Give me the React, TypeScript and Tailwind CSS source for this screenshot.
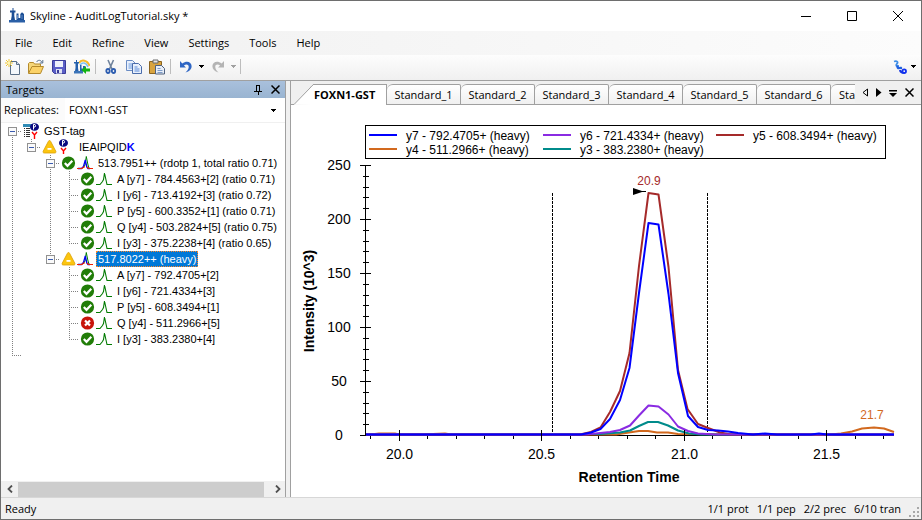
import { ReactNode } from "react";
import clsx from "clsx";

type Cell = "none" | "pass" | "leaf" | "end" | "open" | "openEnd" | "openTop";
type Status = "ok" | "warn" | "error";
type Kind = "protein" | "peptide" | "precursor" | "transition";

interface TreeRow {
  cells: Cell[];
  status?: Status;
  kind: Kind;
  label: ReactNode;
  selected?: boolean;
}

const menus = ["File", "Edit", "Refine", "View", "Settings", "Tools", "Help"];

const tabs = ["Standard_1", "Standard_2", "Standard_3", "Standard_4", "Standard_5", "Standard_6"];

const counts = ["1/1 prot", "1/1 pep", "2/2 prec", "6/10 tran"];

const rows: TreeRow[] = [
  { cells: ["openTop"], kind: "protein", label: "GST-tag" },
  { cells: ["pass", "openEnd"], status: "warn", kind: "peptide", label: <>IEAIPQID<b className="text-[#0000ff]">K</b></> },
  { cells: ["pass", "none", "open"], status: "ok", kind: "precursor", label: "513.7951++ (rdotp 1, total ratio 0.71)" },
  { cells: ["pass", "none", "pass", "leaf"], status: "ok", kind: "transition", label: "A [y7] - 784.4563+[2] (ratio 0.71)" },
  { cells: ["pass", "none", "pass", "leaf"], status: "ok", kind: "transition", label: "I [y6] - 713.4192+[3] (ratio 0.72)" },
  { cells: ["pass", "none", "pass", "leaf"], status: "ok", kind: "transition", label: "P [y5] - 600.3352+[1] (ratio 0.71)" },
  { cells: ["pass", "none", "pass", "leaf"], status: "ok", kind: "transition", label: "Q [y4] - 503.2824+[5] (ratio 0.75)" },
  { cells: ["pass", "none", "pass", "end"], status: "ok", kind: "transition", label: "I [y3] - 375.2238+[4] (ratio 0.65)" },
  { cells: ["pass", "none", "openEnd"], status: "warn", kind: "precursor", label: "517.8022++ (heavy)", selected: true },
  { cells: ["pass", "none", "none", "leaf"], status: "ok", kind: "transition", label: "A [y7] - 792.4705+[2]" },
  { cells: ["pass", "none", "none", "leaf"], status: "ok", kind: "transition", label: "I [y6] - 721.4334+[3]" },
  { cells: ["pass", "none", "none", "leaf"], status: "ok", kind: "transition", label: "P [y5] - 608.3494+[1]" },
  { cells: ["pass", "none", "none", "leaf"], status: "error", kind: "transition", label: "Q [y4] - 511.2966+[5]" },
  { cells: ["pass", "none", "none", "end"], status: "ok", kind: "transition", label: "I [y3] - 383.2380+[4]" },
];

/* ---------- icons ---------- */

function Icon({ children, className }: { children: ReactNode; className?: string }) {
  return (
    <svg viewBox="0 0 16 16" className={clsx("h-4 w-4 shrink-0", className)} fill="none" aria-hidden="true">
      {children}
    </svg>
  );
}

const AppIcon = () => (
  <Icon>
    <path d="M3.500 0h1v2.500h2v2H5.300V8l.7 4H2l.7-4V4.500H1v-2h2.500z" fill="#1c4f96" />
    <path d="M7.500 5.500h2V10h1.800V6l1.700-1.700L15 6v6H7.500z" fill="#1c4f96" />
    <path d="M0 12h16v2.500H0z" fill="#2a5fa6" />
    <path d="M8.500 7v4M13 7v4" stroke="#6f9ad0" strokeWidth=".8" />
  </Icon>
);

const NewIcon = () => (
  <Icon>
    <path d="M5.500 2.500h6l3 3v10h-9z" fill="#f4f8fc" stroke="#5a6f87" />
    <path d="M11.500 2.500v3h3" fill="#cfdcec" stroke="#5a6f87" />
    <path d="M4 0v8M0 4h8M1 1l6 6M7 1L1 7" stroke="#efc636" />
    <circle cx="4" cy="4" r="1.500" fill="#fff6b0" />
  </Icon>
);

const OpenIcon = () => (
  <Icon>
    <path d="M.5 14V4.500l1-1h4l1 1.500h6v3" fill="#f6d77a" stroke="#b48a2c" />
    <path d="M.5 14.500L4 7.500h11.500l-3 7z" fill="#fbd268" stroke="#b48a2c" />
    <path d="M8.500 3C10 .6 13 .8 14 3.500M14.800 1v3h-3" stroke="#55708f" />
  </Icon>
);

const SaveIcon = () => (
  <Icon>
    <path d="M1.500 1.500h13v13h-11l-2-2z" fill="#5b5fc7" stroke="#3a3c98" />
    <path d="M4 2h8v6H4z" fill="#eef1fb" />
    <path d="M5 10h6v4.500H5z" fill="#dfe3f4" />
    <path d="M6 11h2v3H6z" fill="#3a3c98" />
  </Icon>
);

const ImportIcon = () => (
  <Icon>
    <path d="M5 4C7.500 0 13.500 1 15.500 7" stroke="#f4b92c" strokeWidth="2" />
    <path d="M6 6C8 3 12 3 14 8" stroke="#7ac1f0" strokeWidth="1.500" />
    <path d="M2 1h1v2h2v1.500H4V9l.5 3H1l.5-3V4.500H0V3h2zM6 6h1.500v3.500H9V7h2v5H6z" fill="#2460ac" />
    <path d="M0 12h9v2.500H0z" fill="#3c74b8" />
    <path d="M7.500 11L12 7v2.500h4v3h-4V15z" fill="#12b312" />
  </Icon>
);

const CutIcon = () => (
  <Icon>
    <path d="M5 1l4 9M10.500 1l-4 9" stroke="#70839c" strokeWidth="1.600" />
    <ellipse cx="5" cy="12" rx="1.700" ry="2" stroke="#2d5db0" strokeWidth="1.800" />
    <ellipse cx="10.500" cy="12" rx="1.700" ry="2" stroke="#2d5db0" strokeWidth="1.800" />
  </Icon>
);

const CopyIcon = () => (
  <Icon>
    <path d="M.5 1.500h6l2.500 2.500v7.500H.5z" fill="#e8f0fc" stroke="#6a8cc4" />
    <path d="M2.500 5h4M2.500 7h4M2.500 9h4" stroke="#6a9ae0" />
    <path d="M6.500 4.500h6l3 3v7h-9z" fill="#e8f0fc" stroke="#4a6cab" />
    <path d="M8.500 8h3M8.500 10h5M8.500 12h5" stroke="#5a8ad8" />
  </Icon>
);

const PasteIcon = () => (
  <Icon>
    <path d="M.5 2.500h12v12H.5z" fill="#d9a43f" stroke="#8a6420" />
    <path d="M4 1h5v3H4z" fill="#e6e6e6" stroke="#6b6b6b" />
    <path d="M6.500 6.500h6l3 3v5.500h-9z" fill="#e8eef8" stroke="#4f617f" />
    <path d="M8.500 9.500h3M8.500 11.500h5M8.500 13.500h5" stroke="#7d9cc8" />
  </Icon>
);

const UndoIcon = ({ color }: { color: string }) => (
  <Icon>
    <path d="M2 2v6.500h6L5.900 6.400C8.500 4.600 11 5.600 10.700 8.200c-.2 2-1.400 3.300-3.200 5.300 4-1.300 6.200-3.300 6.100-6.500C13.500 2.700 8.500 1.200 4.300 4.500z" fill={color} />
  </Icon>
);

const HelixIcon = () => (
  <Icon>
    <path d="M2 2.500c3-1 4.500.5 3 2.200S4 7.500 7 7" stroke="#3f8fe6" strokeWidth="1.800" />
    <path d="M5.500 6.500c-.5 2 .5 3 2 2.500s2-.5 1.500 1" stroke="#1f5fe0" strokeWidth="2.200" />
    <path d="M8 11c.5 2 2 3 3.500 2.500" stroke="#1636e0" strokeWidth="2.200" />
    <circle cx="12.200" cy="12.200" r="1.800" stroke="#1030f0" strokeWidth="1.800" />
  </Icon>
);

function Caret({ className }: { className?: string }) {
  return (
    <svg viewBox="0 0 5 3" className={clsx("h-[3px] w-[5px]", className)} fill="currentColor" shapeRendering="crispEdges" aria-hidden="true">
      <path d="M0 0h5v1H0zM1 1h3v1H1zM2 2h1v1H2z" />
    </svg>
  );
}

function StatusIcon({ status }: { status: Status }) {
  if (status === "warn") {
    return (
      <Icon>
        <path d="M8.500 1.500c.6 0 .9.400 1.200 1l5 9.500c.6 1.200.2 2-1 2H3.300c-1.200 0-1.600-.8-1-2l5-9.500c.3-.6.600-1 1.200-1z" fill="#fcc50f" stroke="#dba006" strokeWidth=".8" />
        <path d="M6.500 9h4v1.800h-4z" fill="#fff" />
      </Icon>
    );
  }
  return (
    <Icon>
      <circle cx="8.500" cy="8" r="6.600" fill={status === "ok" ? "#217d08" : "#c8140a"} />
      {status === "ok" ? (
        <path d="M4.800 8l2.700 2.800 4.800-5" stroke="#fff" strokeWidth="2.200" />
      ) : (
        <path d="M6 5.500l5 5M11 5.500l-5 5" stroke="#fff" strokeWidth="2.200" />
      )}
    </Icon>
  );
}

function KindIcon({ kind }: { kind: Kind }) {
  if (kind === "protein") {
    return (
      <Icon>
        <path d="M0 1h10v3H0z" fill="#2f8bb5" />
        <path d="M1 5.500h1M1 7.500h1M1 9.500h1M1 11.500h1M1 13.500h1M3 5.500h4M3 7.500h4M3 9.500h4M3 11.500h4M3 13.500h4" stroke="#333" />
        <ellipse cx="11.500" cy="4" rx="4.500" ry="3.800" fill="#0a0a80" />
        <path d="M10.500 6.500v-5H12q1.300 1.300 0 2.500h-1.500" stroke="#fff" />
        <path d="M9 9l2.500 3L14 9M11.500 12v4" stroke="#f00" strokeWidth="1.400" />
      </Icon>
    );
  }
  if (kind === "peptide") {
    return (
      <Icon>
        <ellipse cx="5.500" cy="4" rx="4.500" ry="3.800" fill="#0a0a80" />
        <path d="M4.500 6.500v-5H6q1.300 1.300 0 2.500H4.500" stroke="#fff" />
        <path d="M3 9l2.500 3L8 9M5.500 12v3" stroke="#f00" strokeWidth="1.400" />
      </Icon>
    );
  }
  if (kind === "precursor") {
    return (
      <Icon>
        <path d="M6 13l2-3 1.300-8.500L10.800 9l1.200 4.500h4" stroke="#008000" />
        <path d="M1 13.500h3.500l2-2L8.300 5l1.500 7 1.200 1.500h2" stroke="#0000f0" strokeWidth="1.300" />
        <path d="M0 13.500h5l1.500-1.500H8M10 12l1.500 1.500H16" stroke="#f02000" strokeWidth="1.200" />
      </Icon>
    );
  }
  return (
    <Icon>
      <path d="M0 13.500h4l2.500-3 1-2L8.500 2l1.500 7 1 4.500h5" stroke="#007a00" strokeWidth="1.100" />
    </Icon>
  );
}

/* ---------- targets tree ---------- */

// dotted connector lines and the collapse box
function TreeCell({ cell }: { cell: Cell }) {
  const open = cell.startsWith("open");
  const up = !["none", "openTop"].includes(cell);
  const down = ["pass", "leaf", "open", "openTop"].includes(cell);
  const across = cell !== "none" && cell !== "pass";
  return (
    <svg viewBox="0 0 19 16" className="h-4 w-[19px] shrink-0" fill="none" shapeRendering="crispEdges" aria-hidden="true">
      <g stroke="#808080" strokeDasharray="1 1">
        {up && <path d="M9.500 0v8" />}
        {down && <path d="M9.500 8v8" />}
        {across && <path d="M9 8.500h10" />}
      </g>
      {open && (
        <>
          <rect x="5.500" y="4.500" width="8" height="8" fill="#fafafa" stroke="#919191" />
          <path d="M7 8.500h5" stroke="#3b5cb0" />
        </>
      )}
    </svg>
  );
}

function TargetsTree() {
  return (
    <ul className="min-h-0 flex-1 overflow-hidden bg-white pl-[2px] font-['Liberation_Sans',sans-serif] text-[11px] leading-4">
      {rows.map((row, i) => (
        <li key={i} className="flex h-4 items-center whitespace-nowrap">
          {row.cells.map((cell, c) => (
            <TreeCell key={c} cell={cell} />
          ))}
          {row.status && <StatusIcon status={row.status} />}
          <span className="flex pl-px">
            <KindIcon kind={row.kind} />
          </span>
          <span
            className={clsx(
              "ml-[3px] px-[2px]",
              row.selected && "bg-[#0078d7] text-white outline-1 -outline-offset-1 outline-dotted outline-[#ff8728]"
            )}
          >
            {row.label}
          </span>
        </li>
      ))}
      <li className="flex h-4">
        <TreeCell cell="end" />
      </li>
    </ul>
  );
}

function TargetsPanel() {
  return (
    <section className="flex w-[285px] shrink-0 flex-col border-r border-[#a0a0a0]">
      <header className="flex h-[17px] items-center bg-linear-to-b from-[#a9c0dc] to-[#99b4d1] pl-[5px]">
        <h2 className="flex-1">Targets</h2>
        <button aria-label="Pin" className="flex w-[17px] justify-center">
          <svg viewBox="0 0 8 10" className="h-[10px] w-2" fill="none" stroke="#000" shapeRendering="crispEdges">
            <path d="M2.500 6V.5h3V6M5 1v5M0 6.500h8M4 7v3" />
          </svg>
        </button>
        <button aria-label="Close" className="flex w-[19px] justify-center">
          <svg viewBox="0 0 9 9" className="h-[9px] w-[9px]" fill="none" stroke="#000" strokeWidth="1.500">
            <path d="M.5.5l8 8M8.500.5l-8 8" />
          </svg>
        </button>
      </header>
      <div className="flex h-[25px] items-center border-b border-[#f0f0f0] bg-[#fbfbfb] pl-[3px]">
        <label htmlFor="replicates" className="w-[61px]">Replicates:</label>
        <div className="relative flex h-full flex-1 items-center bg-white">
          <select id="replicates" className="h-full w-full appearance-none bg-transparent pl-1 outline-none">
            <option>FOXN1-GST</option>
            <option>Standard_1</option>
            <option>Standard_2</option>
          </select>
          <Caret className="pointer-events-none absolute right-[9px]" />
        </div>
      </div>
      <TargetsTree />
      <div className="flex h-4 items-center bg-[#f0f0f0]">
        <button aria-label="Scroll left" className="flex w-[17px] justify-center">
          <svg viewBox="0 0 6 8" className="h-2 w-[6px]" fill="none" stroke="#505050" strokeWidth="1.800">
            <path d="M5 .5L1.500 4 5 7.500" />
          </svg>
        </button>
        <div className="h-[15px] flex-1 bg-[#cdcdcd]" />
        <button aria-label="Scroll right" className="flex w-[21px] justify-center pl-[6px]">
          <svg viewBox="0 0 6 8" className="h-2 w-[6px]" fill="none" stroke="#505050" strokeWidth="1.800">
            <path d="M1 .5L4.500 4 1 7.500" />
          </svg>
        </button>
      </div>
    </section>
  );
}

/* ---------- chromatogram ---------- */

const BASE = 329.5;

const series = [
  { name: "y4 - 511.2966+ (heavy)", color: "#d2691e", points: `75,${BASE} 84,329 88,328.500 104,328.500 108,${BASE} 142,329 154,328.500 160,${BASE} 325,${BASE} 338,327.500 348,326 357,326 366,327.500 377,327.500 387,329 540,${BASE} 550,328.500 561,326.500 571,323.500 583,322.500 593,323.500 603,327` },
  { name: "y3 - 383.2380+ (heavy)", color: "#008b8b", points: `75,${BASE} 309,329 329,327.500 339,325.500 348,321 357,317 367,317 377,320.500 387,325.500 398,328.500 410,${BASE} 603,${BASE}` },
  { name: "y5 - 608.3494+ (heavy)", color: "#a52a2a", points: `75,${BASE} 289,${BASE} 300,327 309.500,322.500 319,307 329,286 338.500,248 348,161 357.500,88 367.500,89.500 377.500,162 387,265 396.500,304 407,319 417,323 429,327.500 440,${BASE} 603,${BASE}` },
  { name: "y6 - 721.4334+ (heavy)", color: "#8a2be2", points: `75,${BASE} 295,${BASE} 319,327 329,325 339,320.500 348,310.500 357.500,300.500 367.500,301.500 377.500,309.500 387,321.500 397,326 407,328.500 424,${BASE} 603,${BASE}` },
  { name: "y7 - 792.4705+ (heavy)", color: "#0000ff", points: `75,${BASE} 290,${BASE} 300,327.500 309.500,324 319,314 329,295 338.500,263 348,188 357.500,118 367.500,119.500 377.500,189 387,268 397,311 407,322 417,325 427,325.500 437,326.500 447,328 462,${BASE} 474,328.500 486,${BASE} 520,${BASE} 528,328.500 536,${BASE} 603,${BASE}` },
];

const legend = [
  { series: 4, x: 78, y: 30 },
  { series: 3, x: 252, y: 30 },
  { series: 2, x: 425, y: 30 },
  { series: 0, x: 78, y: 44 },
  { series: 1, x: 252, y: 44 },
];

const xTicks = Array.from({ length: 19 }, (_, i) => 199 + i);
const yTicks = Array.from({ length: 26 }, (_, i) => i * 10);
const toX = (tenths: number) => Math.floor(108 + (tenths - 200) * 28.5) + 0.5;
const toY = (value: number) => Math.round(330 - value * 1.08) + 0.5;

function Chromatogram() {
  return (
    <svg viewBox="0 0 630 392" className="min-h-0 w-full flex-1 bg-white font-['Liberation_Sans',sans-serif]" fill="none" role="img" aria-label="Intensity by retention time">
      <rect x="74.500" y="20.500" width="520" height="33" stroke="#000" />
      {legend.map((item) => (
        <g key={item.series}>
          <path d={`M${item.x} ${item.y}h28`} stroke={series[item.series].color} strokeWidth="2" />
          <text x={item.x + 37} y={item.y + 5} fontSize="12" fill="#000">{series[item.series].name}</text>
        </g>
      ))}

      <g stroke="#000" shapeRendering="crispEdges">
        <path d="M74 330.500h529M74.500 60v270" />
        {yTicks.map((v) => (
          <path key={v} d={v % 50 ? `M72 ${toY(v)}h6` : `M69 ${toY(v)}h11`} />
        ))}
        {xTicks.map((t) => (
          <path key={t} d={t % 5 ? `M${toX(t)} 331v3` : `M${toX(t)} 325v11`} />
        ))}
        <path d="M261.500 88v242M416.500 88v242" strokeDasharray="3 1" />
      </g>

      {series.map((s) => (
        <polyline key={s.name} points={s.points} stroke={s.color} strokeWidth="2" strokeLinejoin="round" />
      ))}
      <g stroke="#000" shapeRendering="crispEdges">
        {xTicks.filter((t) => t % 5 === 0).map((t) => (
          <path key={t} d={`M${toX(t)} 325v6`} />
        ))}
      </g>
      <path d="M342 83l9 3h4v1h-4l-9 3z" fill="#000" />

      <g fontSize="14" fill="#000" textAnchor="middle">
        {yTicks.filter((v) => v % 50 === 0).map((v) => (
          <text key={v} x="48" y={toY(v) + 4}>{v}</text>
        ))}
        {xTicks.filter((t) => t % 5 === 0).map((t) => (
          <text key={t} x={toX(t)} y="354">{(t / 10).toFixed(1)}</text>
        ))}
        <g fontWeight="bold">
          <text x="338" y="377">Retention Time</text>
          <text transform="translate(23 196) rotate(-90)">Intensity (10^3)</text>
        </g>
      </g>
      <g fontSize="12" textAnchor="middle">
        <text x="358" y="80" fill="#a52a2a">20.9</text>
        <text x="581" y="314" fill="#d2691e">21.7</text>
      </g>
    </svg>
  );
}

const tabStyle = "flex h-[21px] items-center border-t border-b border-[#a0a0a0] bg-linear-to-b from-white to-[#f0f0f0] rounded-tl-md";

function GraphPanel() {
  return (
    <section className="flex min-w-0 flex-1 flex-col border-l border-[#a0a0a0]">
      <div className="flex h-6 items-end bg-[#f0f0f0]">
        <div className="flex h-full min-w-0 flex-1 items-end overflow-hidden" role="tablist">
          <div className="h-full w-[3px] shrink-0 border-b border-[#a0a0a0]" />
          <button role="tab" aria-selected="true" className="flex h-[21px] shrink-0 items-center border-r border-[#a0a0a0] font-bold">
            <svg viewBox="0 0 19 21" className="h-[21px] w-[19px]" fill="#fff" aria-hidden="true">
              <path d="M0 20.500L16 4Q19 .5 22 .5V21z" />
              <path d="M0 20.500L16 4Q18 1.500 19 1" fill="none" stroke="#a0a0a0" />
            </svg>
            <span className="flex h-full w-[73px] items-center border-t border-[#a0a0a0] bg-white pl-px">FOXN1-GST</span>
          </button>
          {tabs.map((tab) => (
            <button key={tab} role="tab" aria-selected="false" className={clsx(tabStyle, "w-[74px] shrink-0 justify-center rounded-tr-xs border-r")}>
              {tab}
            </button>
          ))}
          <button role="tab" aria-selected="false" className={clsx(tabStyle, "min-w-0 flex-1 pl-2")}>
            Sta
          </button>
        </div>
        <div className="flex h-full w-[66px] shrink-0 items-center justify-around border-b border-[#a0a0a0] px-[3px]">
          <button aria-label="Previous tabs">
            <svg viewBox="0 0 6 9" className="h-[9px] w-[6px]" fill="none" stroke="#000"><path d="M5.500 1v7L1 4.500z" /></svg>
          </button>
          <button aria-label="Next tabs">
            <svg viewBox="0 0 6 9" className="h-[9px] w-[6px]"><path d="M0 0v9l5.500-4.500z" /></svg>
          </button>
          <button aria-label="Tab list">
            <svg viewBox="0 0 8 8" className="h-2 w-2"><path d="M0 1h8v1.500H0zM0 4h8L4 8z" /></svg>
          </button>
          <button aria-label="Close tab">
            <svg viewBox="0 0 9 9" className="h-[9px] w-[9px]" fill="none" stroke="#000" strokeWidth="1.500"><path d="M.5.5l8 8M8.500.5l-8 8" /></svg>
          </button>
        </div>
      </div>
      <Chromatogram />
    </section>
  );
}

/* ---------- window frame ---------- */

function TitleBar() {
  return (
    <header className="flex h-[30px] shrink-0 items-center bg-white pl-2">
      <AppIcon />
      <h1 className="flex-1 pl-[5px]">Skyline - AuditLogTutorial.sky *</h1>
      <div className="flex">
        {[
          { name: "Minimize", d: "M0 5.500h10" },
          { name: "Maximize", d: "M.5.5h9v9h-9z" },
          { name: "Close", d: "M0 0l10 10M10 0L0 10" },
        ].map((b) => (
          <button key={b.name} aria-label={b.name} className="flex h-7 w-[46px] items-center justify-center">
            <svg viewBox="0 0 10 10" className="h-[10px] w-[10px]" fill="none" stroke="#000"><path d={b.d} /></svg>
          </button>
        ))}
      </div>
    </header>
  );
}

function ToolButton({ name, children }: { name: string; children: ReactNode }) {
  return (
    <button aria-label={name} className="flex w-[23px] items-center justify-center">
      {children}
    </button>
  );
}

const Separator = () => <div className="mx-[2px] h-[15px] w-[2px] border-l border-[#bdbdbd]" />;

function Toolbar() {
  return (
    <div className="flex h-[25px] shrink-0 items-center bg-linear-to-b from-[#fdfdfd] to-[#f0f0f0] pb-[2px]" role="toolbar">
      <ToolButton name="New"><NewIcon /></ToolButton>
      <ToolButton name="Open"><OpenIcon /></ToolButton>
      <ToolButton name="Save"><SaveIcon /></ToolButton>
      <ToolButton name="Import results"><ImportIcon /></ToolButton>
      <Separator />
      <ToolButton name="Cut"><CutIcon /></ToolButton>
      <ToolButton name="Copy"><CopyIcon /></ToolButton>
      <ToolButton name="Paste"><PasteIcon /></ToolButton>
      <Separator />
      <ToolButton name="Undo"><UndoIcon color="#2f66c4" /></ToolButton>
      <button aria-label="Undo list" className="px-[2px]"><Caret /></button>
      <ToolButton name="Redo">
        <span className="flex -scale-x-100"><UndoIcon color="#b4b4b4" /></span>
      </ToolButton>
      <button aria-label="Redo list" className="px-[2px] text-[#a0a0a0]"><Caret /></button>
      <Separator />
      <div className="flex-1" />
      <ToolButton name="Panorama"><HelixIcon /></ToolButton>
      <button aria-label="Panorama list" className="pr-[5px]"><Caret /></button>
    </div>
  );
}

export default function App() {
  return (
    <div className="flex h-screen flex-col border border-[#6e6e6e] bg-[#f0f0f0] font-['Open_Sans',sans-serif] text-[11px] leading-4 text-black">
      <TitleBar />
      <nav className="flex h-6 shrink-0 items-center gap-[2px] bg-linear-to-r from-[#f0f0f0] to-[#fcfcfc] pl-[5px]">
        {menus.map((menu) => (
          <button key={menu} className="px-[9px]">{menu}</button>
        ))}
      </nav>
      <Toolbar />
      <main className="flex min-h-0 flex-1 gap-1 border-y border-t-[#a0a0a0] border-b-[#d7d7d7]">
        <TargetsPanel />
        <GraphPanel />
      </main>
      <footer className="flex h-[21px] shrink-0 items-center gap-2 pr-[2px] pl-1">
        <span className="flex-1">Ready</span>
        {counts.map((count) => (
          <span key={count}>{count}</span>
        ))}
        <svg viewBox="0 0 10 12" className="h-3 w-[10px] self-end" fill="#a8a8a8" aria-hidden="true">
          <path d="M8 0h2v2H8zM4 4h2v2H4zM8 4h2v2H8zM0 8h2v2H0zM4 8h2v2H4zM8 8h2v2H8z" />
        </svg>
      </footer>
    </div>
  );
}
